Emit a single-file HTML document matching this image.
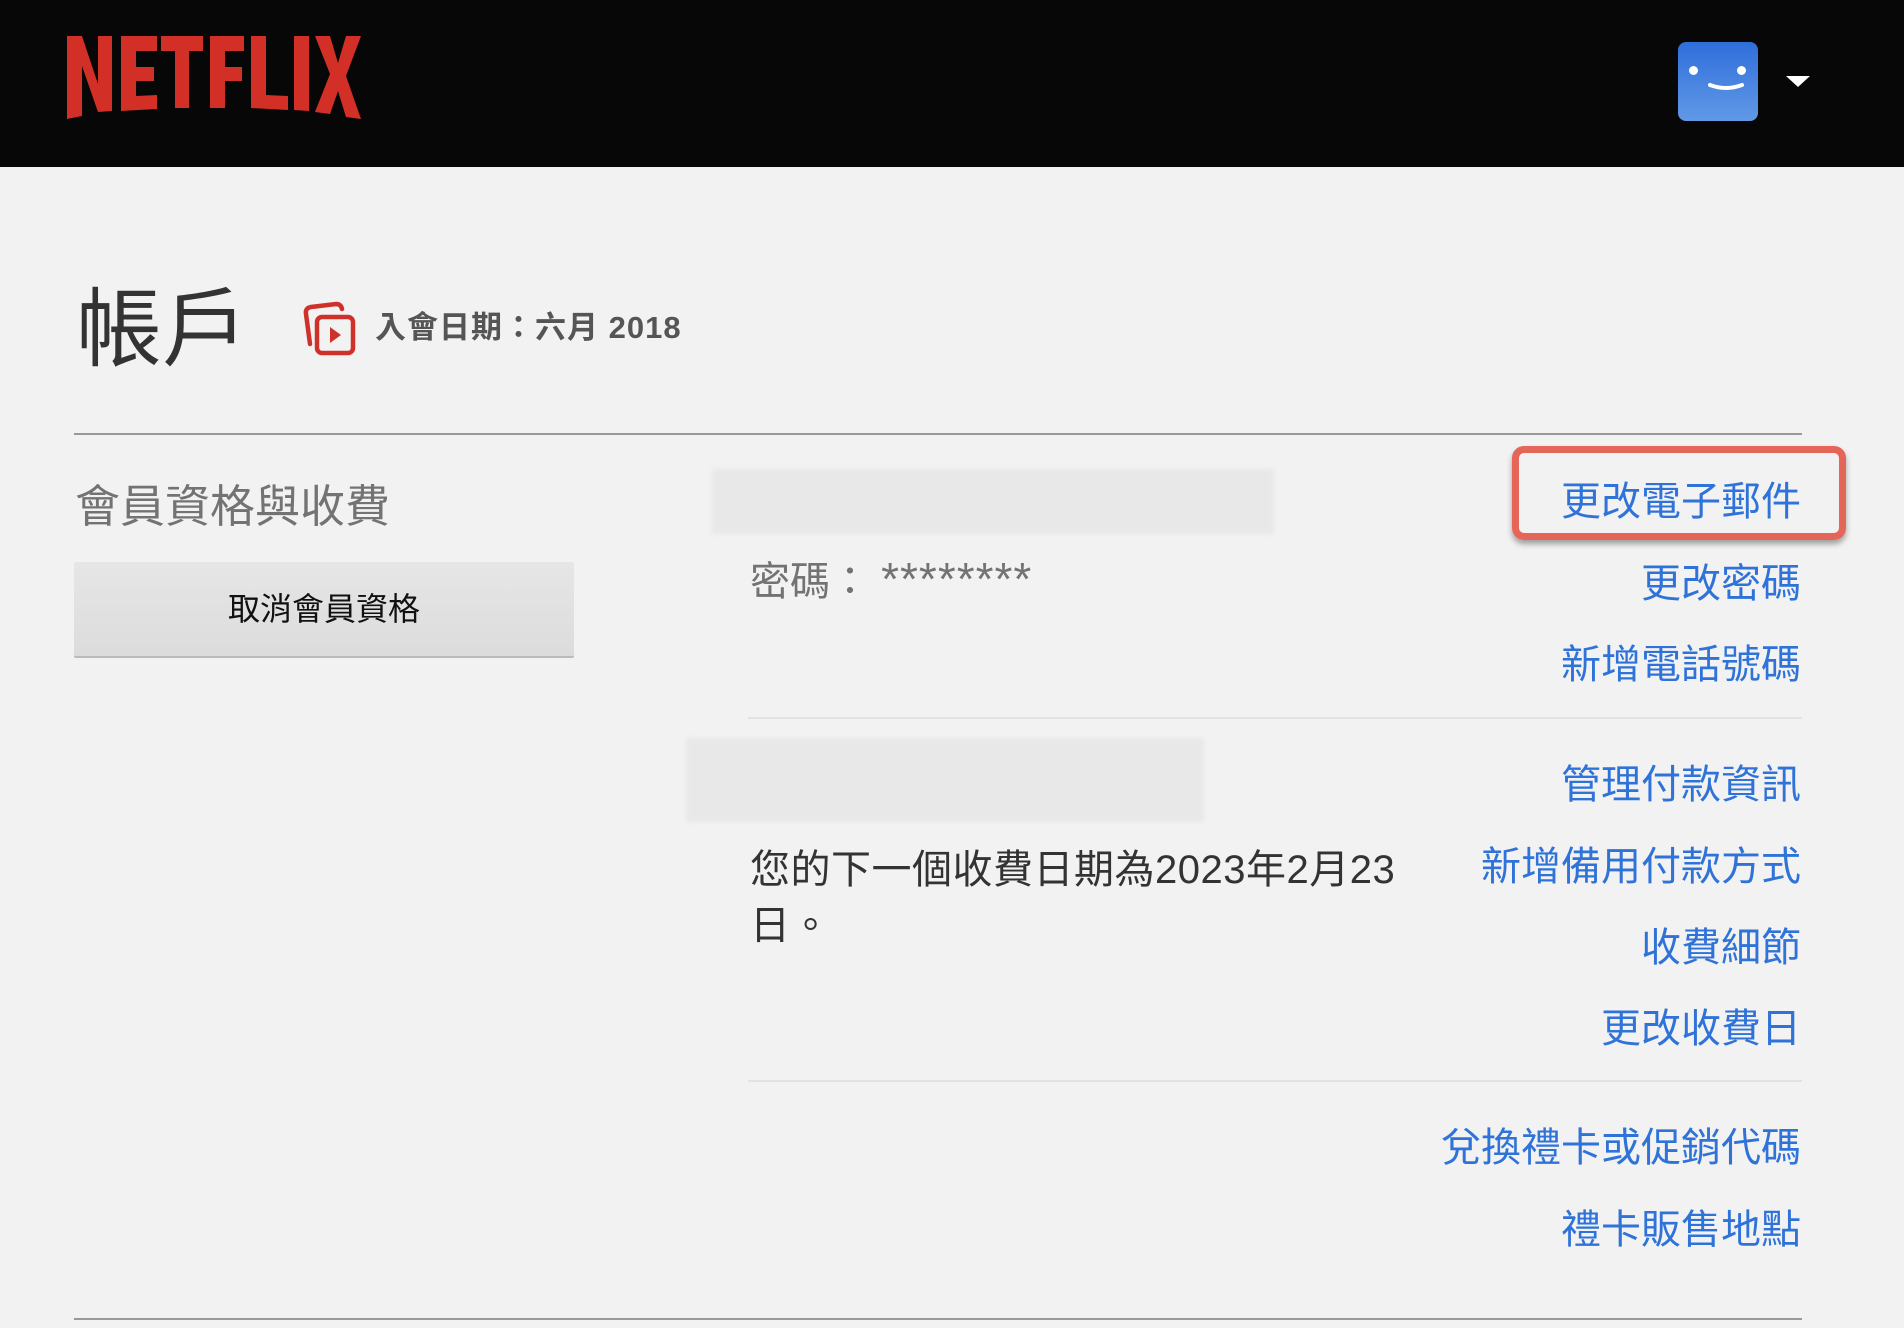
<!DOCTYPE html>
<html><head><meta charset="utf-8">
<style>
*{margin:0;padding:0;box-sizing:border-box}
body{width:1904px;height:1328px;background:#f2f2f2;position:relative;overflow:hidden;font-family:"Liberation Sans","Noto Sans CJK TC",sans-serif}
.hdr{position:absolute;left:0;top:0;width:1904px;height:167px;background:#070707}
.abs{position:absolute;white-space:nowrap}
.lnk{position:absolute;right:103px;color:#2f73d9;font-size:40px;line-height:50px;white-space:nowrap}
.line{position:absolute;height:2px}
</style></head><body>
<div class="hdr">
<svg class="abs" style="left:67px;top:36px" width="294" height="84" viewBox="0 0 294 84">
<g fill="#d22f27">
<polygon points="0,0 15,0 31,48 31,0 45,0 45,75 31,76 15,30 15,80 0,83"/>
<polygon points="54,0 90,0 90,15 69,15 69,31 87,31 87,45 69,45 69,60 90,59 90,73 54,75"/>
<polygon points="94,0 136,0 136,15 122,15 122,72 108,72 108,15 94,15"/>
<polygon points="143,0 177,0 177,15 158,15 158,31 175,31 175,45 158,45 158,72 143,72"/>
<polygon points="184,0 199,0 199,59 221,60 221,74 184,72"/>
<polygon points="227,0 242,0 242,75 227,74"/>
<polygon points="248,0 263,0 271,27 279,0 294,0 279,40 294,83 279,81 271,55 263,78 248,76 263,38"/>
</g></svg>
<div class="abs" style="left:1678px;top:42px;width:80px;height:79px;border-radius:8px;background:linear-gradient(#2f6edb,#6199e6)">
<div class="abs" style="left:11px;top:24px;width:9px;height:9px;border-radius:50%;background:#fff"></div>
<div class="abs" style="left:59px;top:24px;width:9px;height:9px;border-radius:50%;background:#fff"></div>
<svg class="abs" style="left:30px;top:40px" width="40" height="12"><path d="M2 3 Q18 9 34 3" stroke="#fff" stroke-width="4" fill="none" stroke-linecap="round"/></svg>
</div>
<div class="abs" style="left:1786px;top:76px;width:0;height:0;border-left:12px solid transparent;border-right:12px solid transparent;border-top:11px solid #fff"></div>
</div>

<div class="abs" style="left:76px;top:280px;font-size:86px;line-height:100px;color:#333">帳戶</div>
<svg class="abs" style="left:300px;top:300px" width="58" height="58" viewBox="0 0 58 58">
<path d="M10 44 L6 14 Q5 8 11 7 L36 4 Q41 4 42 9" stroke="#d0302a" stroke-width="4.5" fill="none" stroke-linecap="round"/>
<rect x="17" y="17" width="36" height="36" rx="5" stroke="#d0302a" stroke-width="4.5" fill="none"/>
<polygon points="30,27 41,35 30,43" fill="#d0302a"/>
</svg>
<div class="abs" style="left:375px;top:309px;font-size:31px;line-height:38px;font-weight:bold;color:#555;letter-spacing:1px">入會日期：六月 2018</div>

<div class="line" style="left:74px;top:433px;width:1728px;background:#999"></div>

<div class="abs" style="left:75px;top:479px;font-size:45px;line-height:56px;color:#737373">會員資格與收費</div>
<div class="abs" style="left:74px;top:562px;width:500px;height:94px;background:linear-gradient(#e6e6e6,#dcdcdc);border-radius:2px;box-shadow:0 2px 0 #bbb;text-align:center;font-size:32px;line-height:94px;color:#111">取消會員資格</div>

<div class="abs" style="left:712px;top:469px;width:562px;height:65px;background:#e8e8e8;filter:blur(2px)"></div>
<div class="abs" style="left:750px;top:554px;font-size:40px;line-height:50px;color:#737373">密碼： <span style="font-size:46px;letter-spacing:1px">********</span></div>

<div class="abs" style="left:1512px;top:446px;width:334px;height:94px;border:7px solid #e56558;border-radius:12px;box-shadow:0 4px 6px rgba(0,0,0,.35)"></div>
<div class="lnk" style="top:477px">更改電子郵件</div>
<div class="lnk" style="top:559px">更改密碼</div>
<div class="lnk" style="top:640px">新增電話號碼</div>

<div class="line" style="left:748px;top:717px;width:1054px;background:#e2e2e2"></div>

<div class="abs" style="left:686px;top:738px;width:518px;height:84px;background:#e8e8e8;filter:blur(2px)"></div>
<div class="abs" style="left:750px;top:842px;font-size:40px;line-height:56px;color:#333;white-space:normal;width:700px;letter-spacing:0.5px">您的下一個收費日期為2023年2月23<br>日。</div>

<div class="lnk" style="top:760px">管理付款資訊</div>
<div class="lnk" style="top:842px">新增備用付款方式</div>
<div class="lnk" style="top:923px">收費細節</div>
<div class="lnk" style="top:1004px">更改收費日</div>

<div class="line" style="left:748px;top:1080px;width:1054px;background:#e2e2e2"></div>

<div class="lnk" style="top:1123px">兌換禮卡或促銷代碼</div>
<div class="lnk" style="top:1205px">禮卡販售地點</div>

<div class="line" style="left:74px;top:1318px;width:1728px;background:#999"></div>
</body></html>
